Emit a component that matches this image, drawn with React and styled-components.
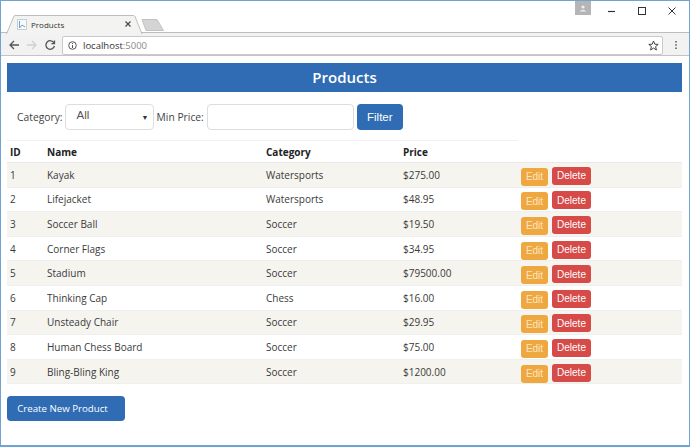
import styled, { createGlobalStyle } from "styled-components";

const products = [
  [1, "Kayak", "Watersports", "$275.00"],
  [2, "Lifejacket", "Watersports", "$48.95"],
  [3, "Soccer Ball", "Soccer", "$19.50"],
  [4, "Corner Flags", "Soccer", "$34.95"],
  [5, "Stadium", "Soccer", "$79500.00"],
  [6, "Thinking Cap", "Chess", "$16.00"],
  [7, "Unsteady Chair", "Soccer", "$29.95"],
  [8, "Human Chess Board", "Soccer", "$75.00"],
  [9, "Bling-Bling King", "Soccer", "$1200.00"],
];

const Global = createGlobalStyle`
  html, body { margin: 0; padding: 0; background: #fff; }
  body { font-family: "Open Sans", "Noto Sans", sans-serif; color: #333; }
`;

const Frame = styled.div`
  width: 690px;
  height: 447px;
  box-sizing: border-box;
  border: 1px solid #6fa3d4;
  border-bottom-width: 2px;
  overflow: hidden;
  background: #fff;
`;

const TabStrip = styled.div`
  height: 31px;
  box-sizing: border-box;
  padding: 13px 0 0 5px;
  display: flex;
  align-items: flex-end;
  position: relative;
  background: #fff;
`;

const Tab = styled.div`
  position: relative;
  width: 138px;
  height: 18px;
  display: flex;
  align-items: center;
  padding: 0 0 0 11px;
  box-sizing: border-box;
  font-size: 8px;
  color: #333;
  margin-bottom: -1px;
`;

const TabShape = styled.svg`
  position: absolute;
  left: 0;
  top: 0;
  z-index: 0;
`;

const TabIcon = styled.svg`
  position: relative;
  margin-right: 4px;
`;

const TabTitle = styled.span`
  position: relative;
  flex: 1;
`;

const TabClose = styled.svg`
  position: relative;
  margin-right: 13px;
`;

const NewTab = styled.svg`
  margin: 0 0 1px -3px;
`;

const WindowButtons = styled.div`
  position: absolute;
  right: 0;
  top: 0;
  display: flex;
  align-items: flex-start;
`;

const UserBadge = styled.div`
  width: 16px;
  height: 14px;
  background: #b5b5b5;
  margin-right: 16px;
  display: flex;
  justify-content: center;
  align-items: center;
`;

const WinButton = styled.svg`
  width: 10px;
  height: 10px;
  margin: 5px 0 0 0;
  &:not(:last-child) { margin-right: 20px; }
  &:last-child { margin-right: 12px; }
`;

const Toolbar = styled.div`
  height: 24px;
  box-sizing: border-box;
  background: #f2f2f2;
  border-top: 1px solid #bdbdbd;
  border-bottom: 1px solid #c4c4c4;
  display: flex;
  align-items: center;
  padding: 2px 8px 0 7px;
  gap: 6px;
`;

const NavIcon = styled.svg`
  flex: none;
  margin-left: ${(p) => p.$push || 0}px;
`;

const AddressBar = styled.div`
  flex: 1;
  height: 19px;
  box-sizing: border-box;
  background: #fff;
  border: 1px solid #c9c9c9;
  border-radius: 2px;
  display: flex;
  align-items: center;
  padding: 0 3px 0 5px;
  gap: 6px;
  font-size: 9.5px;
  color: #333;
`;

const Url = styled.span`
  flex: 1;
  span { color: #8a8a8a; }
`;

const Page = styled.div`
  padding: 7px 7px 0 6px;
`;

const Banner = styled.h1`
  margin: 0;
  height: 29px;
  line-height: 29px;
  background: #2f6cb3;
  color: #fff;
  font-size: 15px;
  font-weight: 600;
  text-align: center;
`;

const FilterForm = styled.div`
  display: flex;
  align-items: center;
  box-sizing: border-box;
  height: 48px;
  padding: 2px 0 0 10px;
  font-size: 10.3px;
  color: #444;
`;

const FieldLabel = styled.label`
  margin-right: 2px;
`;

const SelectBox = styled.div`
  width: 89px;
  height: 26px;
  box-sizing: border-box;
  border: 1px solid #ddd;
  border-radius: 4px;
  margin-right: 3px;
  padding: 0 4px 4px 11px;
  display: flex;
  align-items: center;
  justify-content: space-between;
  font-family: "Liberation Sans", sans-serif;
  font-size: 11.5px;
  color: #555;
  i { font-style: normal; font-size: 7px; color: #333; padding-top: 4px; }
`;

const TextBox = styled.input`
  width: 147px;
  height: 26px;
  box-sizing: border-box;
  border: 1px solid #ddd;
  border-radius: 4px;
  margin: 0 3px 0 1px;
  outline: none;
`;

const Button = styled.button`
  border: none;
  color: #fff;
  background: ${(p) => p.$bg};
  border-radius: ${(p) => p.$radius || 3}px;
  font-family: "Liberation Sans", sans-serif;
  padding: 0;
`;

const FilterButton = styled(Button)`
  width: 46px;
  height: 26px;
  font-size: 11.5px;
`;

const Table = styled.table`
  width: 675px;
  table-layout: fixed;
  border-collapse: collapse;
  font-size: 10px;
`;

const Head = styled.th`
  box-sizing: border-box;
  width: ${(p) => p.$w}px;
  height: 22px;
  padding: 0 3px;
  text-align: left;
  font-weight: 700;
  color: #222;
  border-top: ${(p) => (p.$plain ? "none" : "1px solid #f0f0f0")};
  border-bottom: 1px solid #e8e8e8;
`;

const Row = styled.tr`
  height: 24.6px;
  background: ${(p) => (p.$odd ? "#f5f4ef" : "#fff")};
  border-bottom: 1px solid #efefef;
`;

const Cell = styled.td`
  padding: 0 3px;
  color: #3a3a3a;
`;

const Actions = styled.div`
  display: flex;
  gap: 4px;
  padding-top: 4px;
`;

const EditButton = styled(Button)`
  width: 27px;
  height: 18px;
  font-size: 10px;
  color: #fbe6c4;
`;

const DeleteButton = styled(Button)`
  width: 39px;
  height: 18px;
  margin-top: -1px;
  font-size: 10px;
`;

const CreateButton = styled(Button)`
  display: block;
  width: 118px;
  height: 25px;
  margin-top: 12px;
  padding-right: 7px;
  font-family: "Open Sans", sans-serif;
  font-size: 9.7px;
  font-weight: 500;
`;

export default function App() {
  return (
    <Frame>
      <Global />
      <TabStrip>
        <Tab>
          <TabShape width="138" height="19" viewBox="0 0 138 19">
            <path d="M0.5 19 L8 1 Q8.5 0.5 10 0.5 L127 0.5 Q128.5 0.5 129 1.5 L136 19 Z" fill="#f3f3f1" stroke="#bdbdbd" />
            <path d="M1 18.6 L135 18.6" stroke="#f3f3f1" strokeWidth="1.4" />
          </TabShape>
          <TabIcon width="10" height="11" viewBox="0 0 10 11">
            <rect x="0.5" y="0.5" width="9" height="10" fill="#fafafa" stroke="#c3cfdb" />
            <path d="M2.5 2 V9 M2.5 9 L5 6 L8 8" stroke="#6fa0cf" strokeWidth="1" fill="none" />
          </TabIcon>
          <TabTitle>Products</TabTitle>
          <TabClose width="6" height="6" viewBox="0 0 6 6">
            <path d="M0.5 0.5 L5.5 5.5 M5.5 0.5 L0.5 5.5" stroke="#444" strokeWidth="1.1" />
          </TabClose>
        </Tab>
        <NewTab width="24" height="12" viewBox="0 0 24 12">
          <path d="M1 0.5 L16 0.5 L22.5 11.5 L5 11.5 Z" fill="#d4d4d4" stroke="#c2c2c2" />
        </NewTab>
        <WindowButtons>
          <UserBadge>
            <svg width="8" height="7" viewBox="0 0 8 7">
              <circle cx="4" cy="2" r="1.6" fill="#eee" />
              <path d="M0.5 6.5 Q4 2.8 7.5 6.5 Z" fill="#eee" />
            </svg>
          </UserBadge>
          <WinButton viewBox="0 0 10 10"><path d="M1 5.5 H8" stroke="#333" strokeWidth="1.2" /></WinButton>
          <WinButton viewBox="0 0 10 10"><rect x="1.5" y="1.5" width="7" height="7" fill="none" stroke="#333" strokeWidth="1" /></WinButton>
          <WinButton viewBox="0 0 10 10"><path d="M1.5 1.5 L8.5 8.5 M8.5 1.5 L1.5 8.5" stroke="#333" strokeWidth="1" /></WinButton>
        </WindowButtons>
      </TabStrip>
      <Toolbar>
        <NavIcon width="12" height="12" viewBox="0 0 12 12"><path d="M11 6 H2 M6 2 L2 6 L6 10" fill="none" stroke="#555" strokeWidth="1.3" /></NavIcon>
        <NavIcon width="12" height="12" viewBox="0 0 12 12"><path d="M1 6 H10 M6 2 L10 6 L6 10" fill="none" stroke="#cfcfcf" strokeWidth="1.3" /></NavIcon>
        <NavIcon width="12" height="12" viewBox="0 0 12 12"><path d="M10 4 A4.3 4.3 0 1 0 10.4 7 M10.5 1.5 V4.6 H7.4" fill="none" stroke="#555" strokeWidth="1.3" /></NavIcon>
        <AddressBar>
          <svg width="9" height="9" viewBox="0 0 9 9"><circle cx="4.5" cy="4.5" r="3.8" fill="none" stroke="#555" /><path d="M4.5 4 V7 M4.5 2 V3" stroke="#555" /></svg>
          <Url>localhost<span>:5000</span></Url>
          <svg width="11" height="11" viewBox="0 0 11 11"><path d="M5.5 1 L6.8 4.2 L10.2 4.4 L7.6 6.6 L8.4 10 L5.5 8.1 L2.6 10 L3.4 6.6 L0.8 4.4 L4.2 4.2 Z" fill="none" stroke="#444" /></svg>
        </AddressBar>
        <NavIcon $push={2} width="10" height="12" viewBox="0 0 10 12"><path d="M5 2 V3.4 M5 5.3 V6.7 M5 8.6 V10" stroke="#555" strokeWidth="1.5" /></NavIcon>
      </Toolbar>
      <Page>
        <Banner>Products</Banner>
        <FilterForm>
          <FieldLabel>Category:</FieldLabel>
          <SelectBox>All<i>▼</i></SelectBox>
          <FieldLabel>Min Price:</FieldLabel>
          <TextBox />
          <FilterButton $bg="#2f6cb3" $radius={4}>Filter</FilterButton>
        </FilterForm>
        <Table>
          <thead>
            <tr>
              <Head $w={37}>ID</Head>
              <Head $w={219}>Name</Head>
              <Head $w={137}>Category</Head>
              <Head $w={118}>Price</Head>
              <Head $w={164} $plain />
            </tr>
          </thead>
          <tbody>
            {products.map((p, i) => (
              <Row key={p[0]} $odd={i % 2 === 0}>
                <Cell>{p[0]}</Cell>
                <Cell>{p[1]}</Cell>
                <Cell>{p[2]}</Cell>
                <Cell>{p[3]}</Cell>
                <Cell>
                  <Actions>
                    <EditButton $bg="#efa73f">Edit</EditButton>
                    <DeleteButton $bg="#d64a48">Delete</DeleteButton>
                  </Actions>
                </Cell>
              </Row>
            ))}
          </tbody>
        </Table>
        <CreateButton $bg="#2f6cb3" $radius={4}>Create New Product</CreateButton>
      </Page>
    </Frame>
  );
}
